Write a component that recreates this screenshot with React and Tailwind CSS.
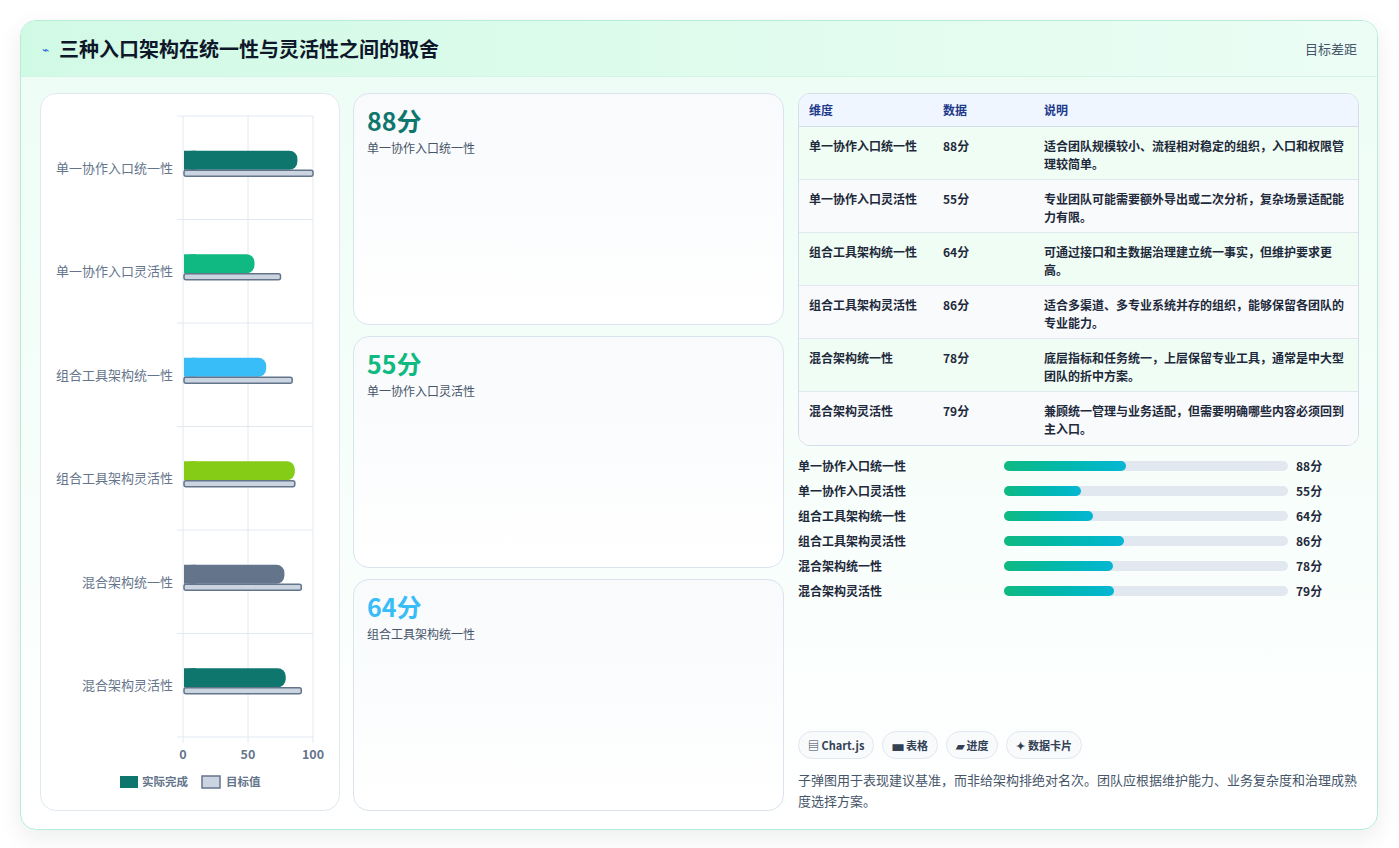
import React from "react";

const F = { fontFamily: '"Noto Sans CJK SC","Noto Sans",sans-serif' };
const rows = [
  ["单一协作入口统一性", 88, "适合团队规模较小、流程相对稳定的组织，入口和权限管理较简单。", 100, "#0f766e"],
  ["单一协作入口灵活性", 55, "专业团队可能需要额外导出或二次分析，复杂场景适配能力有限。", 75, "#10b981"],
  ["组合工具架构统一性", 64, "可通过接口和主数据治理建立统一事实，但维护要求更高。", 84, "#38bdf8"],
  ["组合工具架构灵活性", 86, "适合多渠道、多专业系统并存的组织，能够保留各团队的专业能力。", 86, "#84cc16"],
  ["混合架构统一性", 78, "底层指标和任务统一，上层保留专业工具，通常是中大型团队的折中方案。", 91, "#64748b"],
  ["混合架构灵活性", 79, "兼顾统一管理与业务适配，但需要明确哪些内容必须回到主入口。", 91, "#0f766e"],
];
const cardColors = ["#0f766e", "#10b981", "#38bdf8"];

function Chart() {
  const x0 = 142, sc = 1.3, top = 22, rh = 103.5;
  return (
    <svg width="298" height="716" viewBox="0 0 298 716" style={F}>
      {[0, 50, 100].map((v) => (
        <line key={v} x1={x0 + v * sc} x2={x0 + v * sc} y1={top} y2={top + rh * 6 + 6} stroke="#e2e8f0" />
      ))}
      {Array.from({ length: 7 }).map((_, i) => (
        <line key={i} x1={x0 - 6} x2={x0 + 130} y1={top + rh * i} y2={top + rh * i} stroke="#e2e8f0" />
      ))}
      {rows.map((r, i) => {
        const cy = top + rh * i + rh / 2;
        return (
          <g key={i}>
            <text x={x0 - 10} y={cy + 5} textAnchor="end" fontSize="13" fill="#64748b">{r[0]}</text>
            <rect x={x0 + 1} y={cy - 17} width={r[1] * sc - 1} height={19} rx={8} fill={r[4]} />
            <rect x={x0 + 1} y={cy - 17} width={12} height={19} fill={r[4]} />
            <rect x={x0 + 1} y={cy + 2.5} width={r[3] * sc - 1} height={6} rx={2} fill="#cbd5e1" stroke="#64748b" strokeWidth="1.5" />
          </g>
        );
      })}
      {[0, 50, 100].map((v) => (
        <text key={v} x={x0 + v * sc} y={665} textAnchor="middle" fontSize="12.5" fontWeight="700" fill="#64748b">{v}</text>
      ))}
      <rect x="79" y="682" width="18" height="12" fill="#0f766e" />
      <text x="101" y="692" fontSize="11.5" fontWeight="700" fill="#64748b">实际完成</text>
      <rect x="161" y="682" width="18" height="12" fill="#cbd5e1" stroke="#64748b" strokeWidth="1.5" />
      <text x="185" y="692" fontSize="11.5" fontWeight="700" fill="#64748b">目标值</text>
    </svg>
  );
}

export default function App() {
  return (
    <div className="w-[1399px] h-[848px] bg-white p-5" style={F}>
      <div className="h-[810px] w-[1358px] rounded-2xl border border-[#b7ecd9] shadow-[0_8px_24px_rgba(15,23,42,0.08)] overflow-hidden flex flex-col bg-gradient-to-b from-[#ecfdf5] to-[#ffffff]">
        <div className="h-[56px] shrink-0 flex items-center justify-between pl-[21px] pr-5 bg-gradient-to-r from-[#d1fae5] to-[#ecfdf5] border-b border-[#d5f2e8]">
          <div className="flex items-center gap-[10px]">
            <span className="text-[12px] text-[#2563eb]">⌁</span>
            <span className="text-[20px] font-bold text-[#0f172a]">三种入口架构在统一性与灵活性之间的取舍</span>
          </div>
          <span className="text-[13px] text-[#475569]">目标差距</span>
        </div>
        <div className="flex-1 flex gap-[13px] pl-[19px] pr-[18px] pt-4 pb-[19px]">
          <div className="w-[300px] shrink-0 rounded-2xl border border-[#e2e8f0] bg-white">
            <Chart />
          </div>
          <div className="w-[431px] shrink-0 flex flex-col gap-[11px]">
            {rows.slice(0, 3).map((r, i) => (
              <div key={i} className="flex-1 rounded-2xl border border-[#dbe4ee] bg-gradient-to-b from-[#f8fafc] to-[#ffffff] px-[13px] pt-[10px]">
                <div className="text-[25px] font-bold leading-[32px]" style={{ color: cardColors[i] }}>{r[1]}分</div>
                <div className="text-[12px] text-[#475569] mt-[3px]">{r[0]}</div>
              </div>
            ))}
          </div>
          <div className="flex-1 flex flex-col ml-[1px]">
            <div className="rounded-xl border border-[#d5dde8] overflow-hidden text-[12px]">
              <div className="flex h-[33px] items-center bg-[#eff6ff] text-[#1e3a8a] font-semibold border-b border-[#d5dde8]">
                <div className="w-[144px] shrink-0 pl-[10px]">维度</div>
                <div className="w-[101px] shrink-0">数据</div>
                <div className="flex-1">说明</div>
              </div>
              {rows.map((r, i) => (
                <div key={i} className={`flex h-[53px] pt-[10px] text-[#1e293b] font-semibold ${i < 5 ? "border-b border-[#e2e8f0]" : ""} ${i % 2 ? "bg-[#f8fafc]" : "bg-[#f0fdf4]"}`}>
                  <div className="w-[144px] shrink-0 pl-[10px]">{r[0]}</div>
                  <div className="w-[101px] shrink-0">{r[1]}分</div>
                  <div className="flex-1 pr-[12px] leading-[18px]">{r[2]}</div>
                </div>
              ))}
            </div>
            <div className="mt-[11px] flex flex-col gap-[7px]">
              {rows.map((r, i) => (
                <div key={i} className="flex items-center h-[18px] text-[12px] font-semibold text-[#1e293b]">
                  <div className="w-[206px] shrink-0">{r[0]}</div>
                  <div className="w-[284px] shrink-0 h-[10px] rounded-full bg-[#e2e8f0]">
                    <div className="h-full rounded-full bg-gradient-to-r from-[#10b981] to-[#06b6d4]" style={{ width: `${r[1] * 0.49}%` }} />
                  </div>
                  <div className="ml-2 font-bold">{r[1]}分</div>
                </div>
              ))}
            </div>
            <div className="flex-1" />
            <div className="flex gap-[8px] text-[11px] font-bold text-[#334155]">
              {["▤ Chart.js", "▅ 表格", "▰ 进度", "✦ 数据卡片"].map((t) => (
                <span key={t} className="px-[9px] h-[28px] flex items-center rounded-full border border-[#e2e8f0] bg-[#f8fafc]">{t}</span>
              ))}
            </div>
            <p className="mt-[10px] text-[13px] leading-[21px] text-[#475569]">子弹图用于表现建议基准，而非给架构排绝对名次。团队应根据维护能力、业务复杂度和治理成熟度选择方案。</p>
          </div>
        </div>
      </div>
    </div>
  );
}
